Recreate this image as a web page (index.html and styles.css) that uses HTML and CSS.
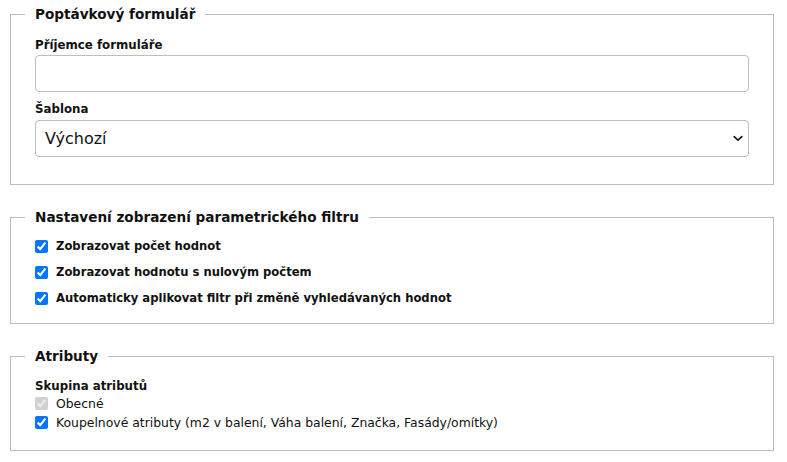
FILE: index.html
```html
<!DOCTYPE html>
<html lang="cs">
<head>
<meta charset="utf-8">
<title>Poptávkový formulář</title>
<link rel="stylesheet" href="styles.css">
</head>
<body>
<form class="page">
  <fieldset class="box box-form">
    <legend class="box-title">Poptávkový formulář</legend>
    <label class="field-label" for="recipient">Příjemce formuláře</label>
    <input class="field-input" id="recipient" type="text">
    <label class="field-label field-label-gap" for="template">Šablona</label>
    <div class="select-wrap">
      <select class="field-select" id="template">
        <option>Výchozí</option>
      </select>
      <svg class="select-arrow" width="10" height="7" viewBox="0 0 10 7" aria-hidden="true">
        <path d="M1.2 1.6 L5 5.2 L8.8 1.6" fill="none" stroke="#1a1a1a" stroke-width="1.7" stroke-linecap="round" stroke-linejoin="round"/>
      </svg>
    </div>
  </fieldset>

  <fieldset class="box box-filter">
    <legend class="box-title">Nastavení zobrazení parametrického filtru</legend>
    <label class="check check-bold"><input type="checkbox" checked><span>Zobrazovat počet hodnot</span></label>
    <label class="check check-bold"><input type="checkbox" checked><span>Zobrazovat hodnotu s nulovým počtem</span></label>
    <label class="check check-bold"><input type="checkbox" checked><span>Automaticky aplikovat filtr při změně vyhledávaných hodnot</span></label>
  </fieldset>

  <fieldset class="box box-attrs">
    <legend class="box-title">Atributy</legend>
    <div class="group-label">Skupina atributů</div>
    <label class="check check-plain"><input type="checkbox" checked disabled><span>Obecné</span></label>
    <label class="check check-plain"><input type="checkbox" checked><span>Koupelnové atributy (m2 v balení, Váha balení, Značka, Fasády/omítky)</span></label>
  </fieldset>
</form>
</body>
</html>
```
FILE: styles.css
```css
html, body {
  margin: 0;
  padding: 0;
  background: #fff;
}
body {
  font-family: "DejaVu Sans", Verdana, sans-serif;
  color: #111;
}
.page {
  padding: 6px 0 0 10px;
  display: flex;
  flex-direction: column;
  gap: 24px;
  width: 764px;
}
.box {
  margin: 0;
  border: 1px solid #bcbcbc;
  padding: 0 24px;
  min-width: 0;
  display: flex;
  flex-direction: column;
}
.box-title {
  font-weight: bold;
  font-size: 13.6px;
  padding: 0 10px;
  margin-left: -10px;
  line-height: 16px;
  color: #111;
}
.box-form {
  padding-top: 16px;
  padding-bottom: 27px;
}
.field-label {
  font-weight: bold;
  font-size: 11.8px;
  line-height: 14px;
  margin-bottom: 3px;
}
.field-label-gap {
  margin-top: 10px;
  margin-bottom: 4px;
}
.field-input,
.field-select {
  box-sizing: border-box;
  width: 100%;
  height: 37px;
  border: 1px solid #bdbdbd;
  border-radius: 4px;
  background: #fff;
  font-family: "DejaVu Sans", Verdana, sans-serif;
  font-size: 16px;
  color: #111;
  margin: 0;
}
.field-input {
  padding: 0 9px;
}
.select-wrap {
  position: relative;
  display: flex;
}
.field-select {
  appearance: none;
  -webkit-appearance: none;
  padding: 0 28px 0 9px;
}
.select-arrow {
  position: absolute;
  right: 6px;
  top: 15px;
  pointer-events: none;
}
.check {
  display: flex;
  align-items: center;
  line-height: 14px;
}
.check input {
  margin: 0 8px 0 0;
  width: 13px;
  height: 13px;
}
.check-bold {
  font-weight: bold;
  font-size: 11.6px;
  height: 26px;
}
.box-filter {
  padding-top: 8px;
  padding-bottom: 12px;
}
.box-attrs {
  padding-top: 15px;
  padding-bottom: 18px;
}
.group-label {
  font-weight: bold;
  font-size: 11.8px;
  line-height: 14px;
  margin-bottom: 1px;
}
.check-plain {
  font-size: 12.4px;
  height: 19px;
}
```
